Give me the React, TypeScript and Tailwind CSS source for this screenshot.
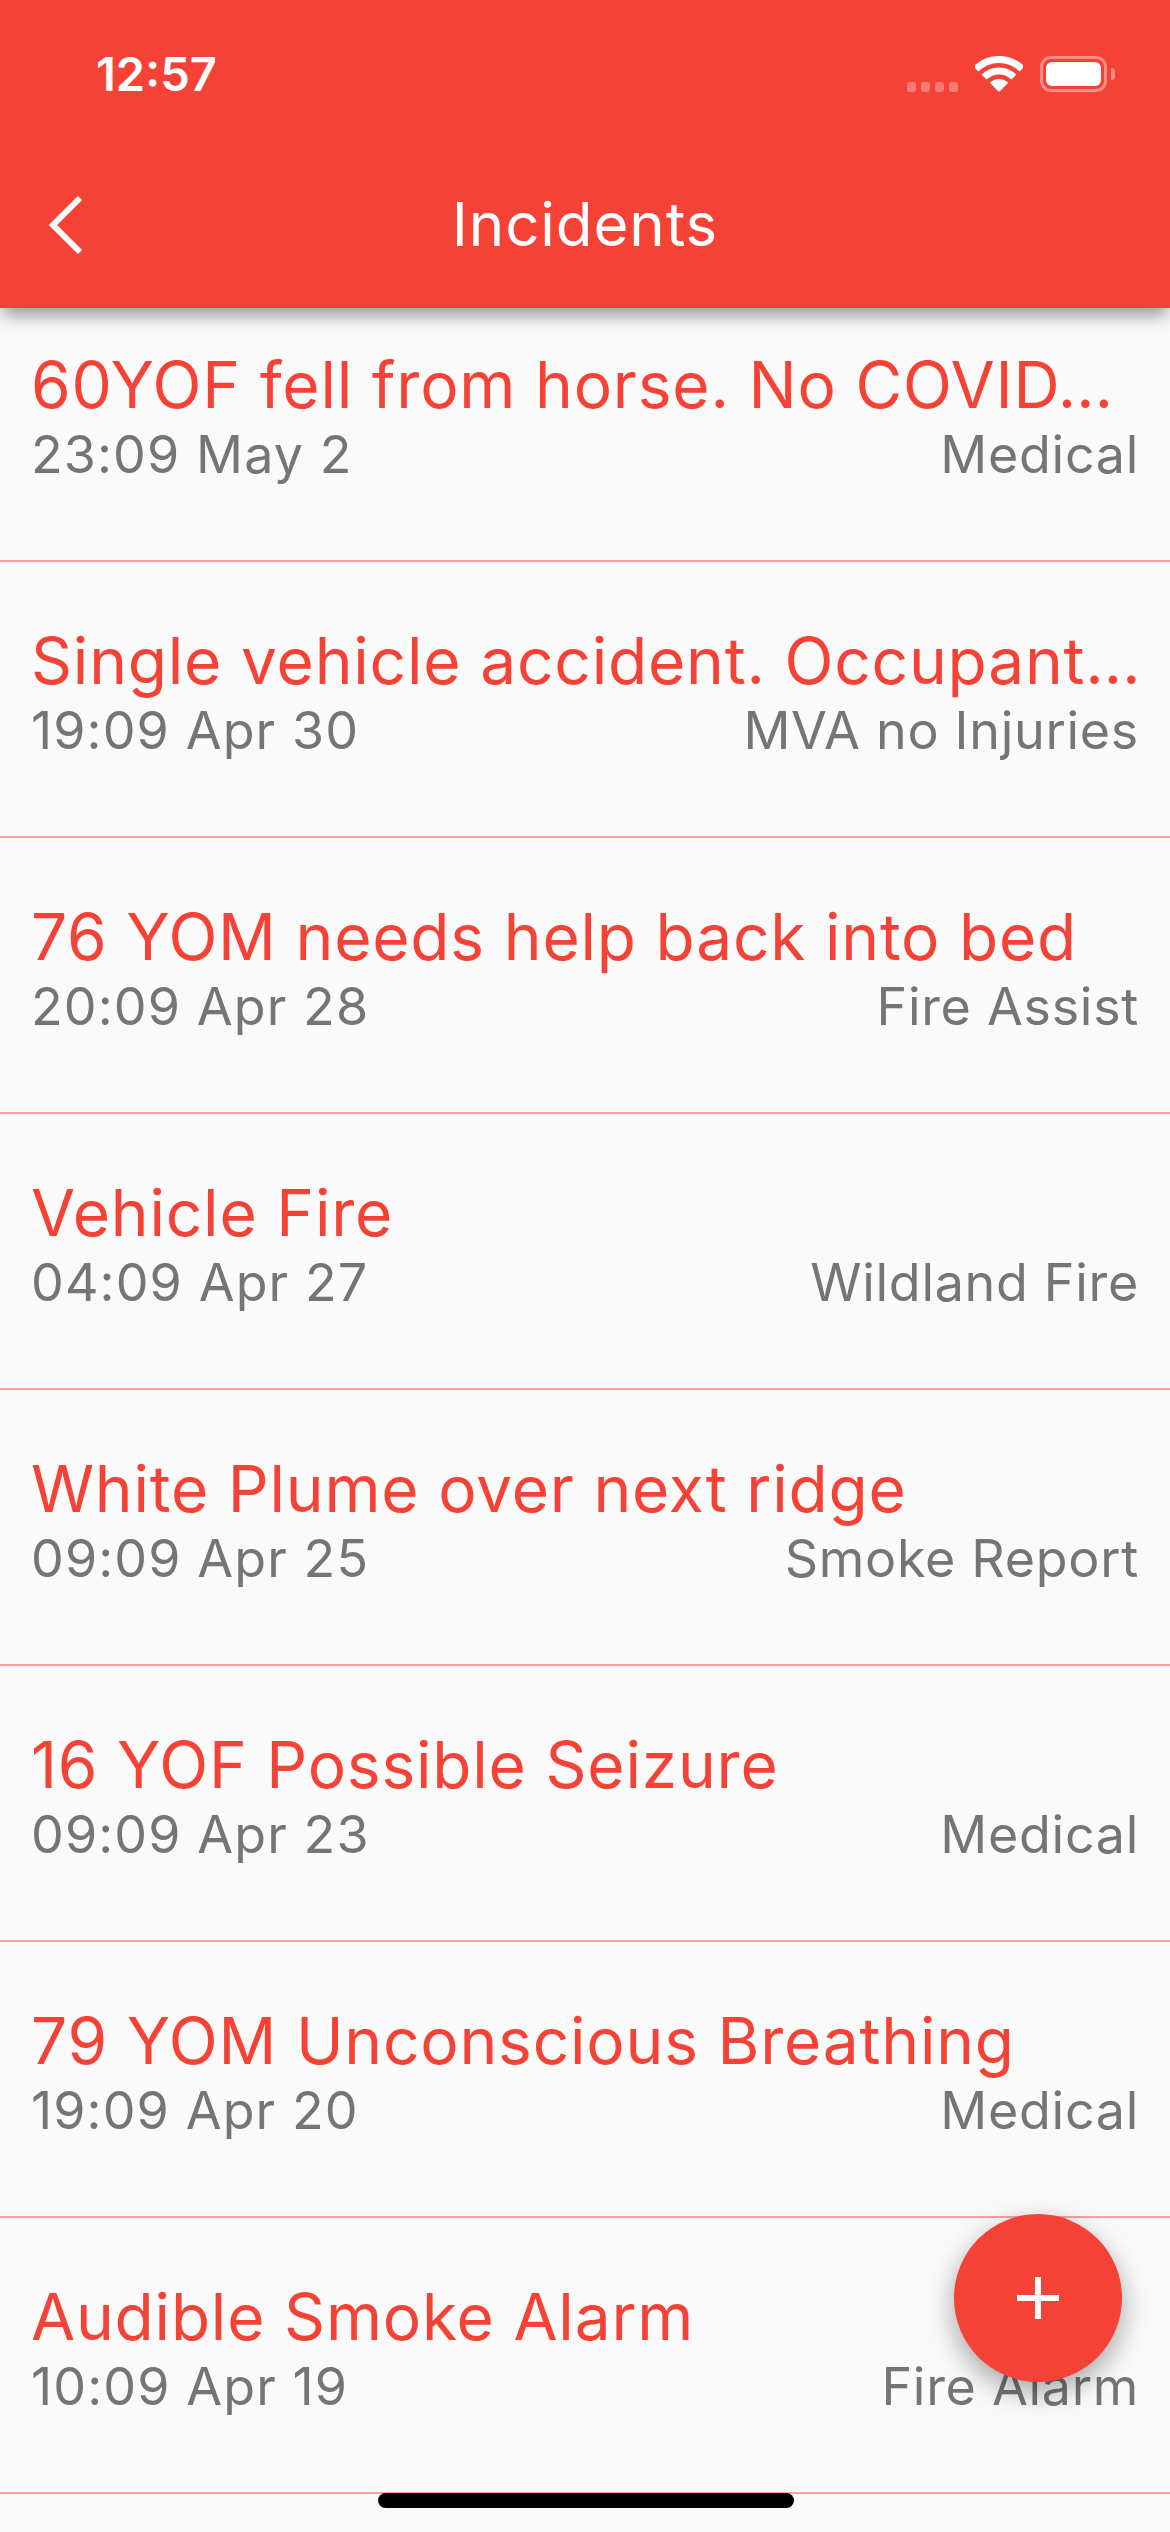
type Incident = {
  title: string;
  when: string;
  kind: string;
};

const incidents: Incident[] = [
  { title: "60YOF fell from horse. No COVID…", when: "23:09 May 2", kind: "Medical" },
  { title: "Single vehicle accident. Occupant…", when: "19:09 Apr 30", kind: "MVA no Injuries" },
  { title: "76 YOM needs help back into bed", when: "20:09 Apr 28", kind: "Fire Assist" },
  { title: "Vehicle Fire", when: "04:09 Apr 27", kind: "Wildland Fire" },
  { title: "White Plume over next ridge", when: "09:09 Apr 25", kind: "Smoke Report" },
  { title: "16 YOF Possible Seizure", when: "09:09 Apr 23", kind: "Medical" },
  { title: "79 YOM Unconscious Breathing", when: "19:09 Apr 20", kind: "Medical" },
  { title: "Audible Smoke Alarm", when: "10:09 Apr 19", kind: "Fire Alarm" },
];

function StatusIcons() {
  return (
    <div className="flex items-start">
      <div className="flex gap-[5px] mt-[26px] mr-[17px]">
        <span className="w-[9px] h-[10px] rounded-[3px] bg-white/30" />
        <span className="w-[9px] h-[10px] rounded-[3px] bg-white/30" />
        <span className="w-[9px] h-[10px] rounded-[3px] bg-white/30" />
        <span className="w-[9px] h-[10px] rounded-[3px] bg-white/30" />
      </div>
      <svg width="48" height="36" viewBox="0 0 48 36" fill="none" className="mr-[17px]">
        <path d="M1 13 A32.5 32.5 0 0 1 47 13" stroke="white" strokeWidth="7" />
        <path d="M9.15 21.15 A21 21 0 0 1 38.85 21.15" stroke="white" strokeWidth="7" />
        <path d="M24 36 L14.8 26.8 A13 13 0 0 1 33.2 26.8 Z" fill="white" />
      </svg>
      <div className="w-[67px] h-[36px] rounded-[11px] border-[3px] border-white/40 p-[3px]">
        <div className="w-full h-full rounded-[6px] bg-white" />
      </div>
      <span className="w-[4px] h-[12px] mt-[12px] ml-[4px] rounded-r-full bg-white/40" />
    </div>
  );
}

export default function App() {
  return (
    <div className="relative h-[2532px] overflow-hidden bg-[#fafafa] font-['Inter',sans-serif]">
      <header className="relative z-10 h-[308px] bg-[#f44336] text-white shadow-[0_10px_16px_-2px_rgba(0,0,0,0.38)]">
        <div className="flex justify-between pt-[56px] pl-[96px] pr-[55px] h-[170px]">
          <span className="text-[47px] leading-[36px] font-semibold">12:57</span>
          <StatusIcons />
        </div>
        <div className="relative flex justify-center">
          <svg width="36" height="60" viewBox="0 0 36 60" fill="none" className="absolute left-[47px] top-[25px]">
            <path d="M33 3 L6 30 L33 57" stroke="white" strokeWidth="6" />
          </svg>
          <h1 className="text-[60px] leading-[68px] font-normal tracking-[0.9px] mt-[20px]">Incidents</h1>
        </div>
      </header>

      <main className="-mt-[22px]">
        {incidents.map((item, i) => (
          <div key={i} className="h-[276px] pl-[31px] pr-[31px] pt-[61px] border-b-2 border-[#f9a19b]">
            <h4 className="text-[64px] leading-[76px] tracking-[0.8px] text-[#f44336] whitespace-nowrap">{item.title}</h4>
            <div className="flex justify-between text-[52px] leading-[64px] text-[#757575]">
              <p className="tracking-[1.1px]">{item.when}</p>
              <p className="tracking-[0.7px]">{item.kind}</p>
            </div>
          </div>
        ))}
      </main>

      <button className="absolute right-[48px] bottom-[150px] z-20 w-[168px] h-[168px] rounded-full bg-[#f44336] flex items-center justify-center shadow-[0_10px_28px_rgba(0,0,0,0.35)]">
        <svg width="42" height="42" viewBox="0 0 42 42" fill="white">
          <rect x="18" y="0" width="6" height="42" />
          <rect x="0" y="18" width="42" height="6" />
        </svg>
      </button>

      <div className="absolute left-[378px] bottom-[24px] z-20 w-[416px] h-[15px] rounded-full bg-black" />
    </div>
  );
}
